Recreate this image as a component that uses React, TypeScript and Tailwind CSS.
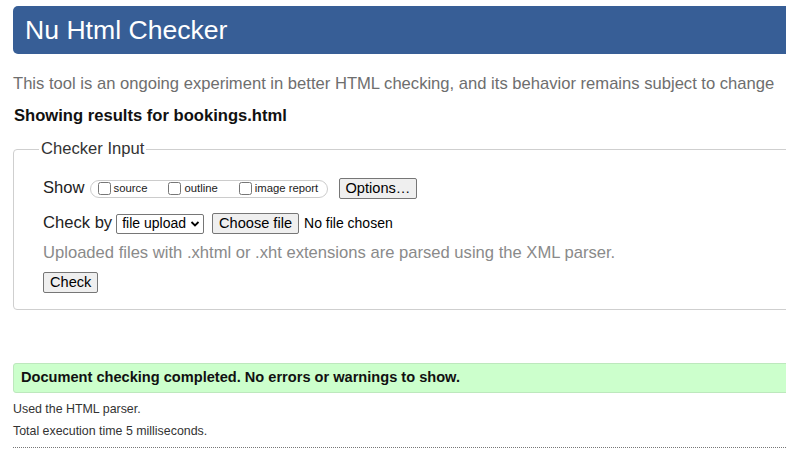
import React from 'react';

const font = { fontFamily: '"Liberation Sans", Arial, sans-serif' };

function NativeButton({ children, className = '' }: { children: React.ReactNode; className?: string }) {
  return (
    <button
      type="button"
      className={`h-[21px] px-[6px] bg-[#efefef] border border-[#767676] rounded-[2px] text-[14.6px] leading-[19px] text-black ${className}`}
    >
      {children}
    </button>
  );
}

function Check({ label, className = '' }: { label: string; className?: string }) {
  return (
    <label className={`flex items-center gap-[3px] ${className}`}>
      <input type="checkbox" className="m-0 w-[13px] h-[13px]" />
      <span className="text-[11.3px] leading-[13px] text-[#222]">{label}</span>
    </label>
  );
}

export default function App() {
  return (
    <div className="w-[786px] h-[457px] overflow-hidden bg-white text-[#222]" style={font}>
      <div className="w-[860px] pl-[13px] pt-[6px]">
        <header className="h-[48px] bg-[#375e96] rounded-l-[5px] flex items-center pl-[12px]">
          <h1 className="text-[26.6px] leading-[32px] text-white">Nu Html Checker</h1>
        </header>

        <p className="mt-[20px] text-[16.6px] leading-[20px] text-[#6e6e6e]">
          This tool is an ongoing experiment in better HTML checking, and its behavior remains subject to change
        </p>

        <p className="mt-[12px] ml-[1px] text-[16.6px] leading-[20px] font-bold text-[#111]">
          Showing results for bookings.html
        </p>

        <fieldset className="mt-[13px] border border-[#cfcfcf] rounded-[4px] pl-[29px] pb-[15px]">
          <legend className="ml-[-4px] px-[2px] text-[16.6px] leading-[20px] text-[#333]">Checker Input</legend>

          <div className="mt-[19px] flex items-center h-[21px]">
            <span className="text-[16.6px] text-[#222]">Show</span>
            <div className="ml-[5px] h-[18px] w-[238px] border border-[#cccccc] rounded-full flex items-center pl-[7px]">
              <Check label="source" />
              <Check label="outline" className="ml-[21px]" />
              <Check label="image report" className="ml-[21px]" />
            </div>
            <NativeButton className="ml-[11px]">Options…</NativeButton>
          </div>

          <div className="mt-[14px] flex items-center h-[21px]">
            <span className="text-[16.6px] text-[#222]">Check by</span>
            <div className="ml-[4px] h-[20px] border border-[#767676] rounded-[2px] flex items-center pl-[5px] pr-[3px] gap-[4px] text-[14px] text-black">
              <span>file upload</span>
              <svg width="10" height="10" viewBox="0 0 10 10">
                <path d="M1.5 3 L5 6.5 L8.5 3" fill="none" stroke="#000" strokeWidth="1.8" />
              </svg>
            </div>
            <NativeButton className="ml-[8px]">Choose file</NativeButton>
            <span className="ml-[5px] text-[14px] text-black">No file chosen</span>
          </div>

          <p className="mt-[9px] text-[16.6px] leading-[20px] text-[#8a8a8a]">
            Uploaded files with .xhtml or .xht extensions are parsed using the XML parser.
          </p>

          <NativeButton className="mt-[9px]">Check</NativeButton>
        </fieldset>

        <div className="mt-[53px] h-[30px] bg-[#ccffcc] border border-[#bde8bd] rounded-l-[3px] flex items-center pl-[7px]">
          <span className="text-[14.6px] font-bold text-[#111]">Document checking completed. No errors or warnings to show.</span>
        </div>

        <p className="mt-[9px] text-[12.4px] leading-[15px] text-[#333]">Used the HTML parser.</p>
        <p className="mt-[7px] text-[12.4px] leading-[15px] text-[#333]">Total execution time 5 milliseconds.</p>

        <div className="mt-[8px] border-t border-dotted border-[#777]" />
      </div>
    </div>
  );
}
